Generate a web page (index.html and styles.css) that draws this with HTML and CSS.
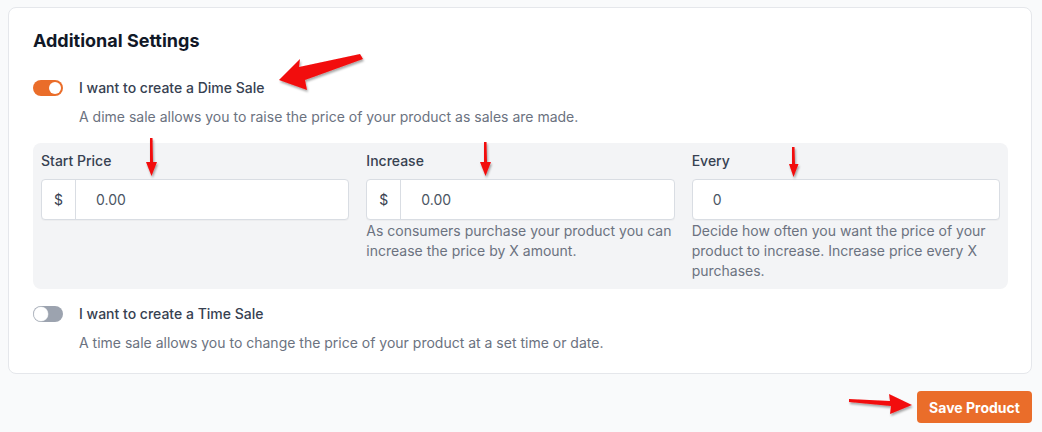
FILE: index.html
```html
<!DOCTYPE html>
<html>
<head>
<meta charset="utf-8">
<link rel="stylesheet" href="styles.css">
</head>
<body>
<div class="page">
  <section class="card">
    <h2 class="title">Additional Settings</h2>

    <div class="toggle-row">
      <span class="toggle on"><span class="knob"></span></span>
      <span class="toggle-label">I want to create a Dime Sale</span>
    </div>
    <p class="desc">A dime sale allows you to raise the price of your product as sales are made.</p>

    <div class="panel">
      <div class="field">
        <label class="field-label">Start Price</label>
        <div class="input-group">
          <span class="addon">$</span>
          <span class="input-value">0.00</span>
        </div>
      </div>
      <div class="field">
        <label class="field-label">Increase</label>
        <div class="input-group">
          <span class="addon">$</span>
          <span class="input-value">0.00</span>
        </div>
        <p class="help">As consumers purchase your product you can increase the price by X amount.</p>
      </div>
      <div class="field">
        <label class="field-label">Every</label>
        <div class="input-group">
          <span class="input-value">0</span>
        </div>
        <p class="help">Decide how often you want the price of your product to increase. Increase price every X purchases.</p>
      </div>
    </div>

    <div class="toggle-row second">
      <span class="toggle off"><span class="knob"></span></span>
      <span class="toggle-label">I want to create a Time Sale</span>
    </div>
    <p class="desc">A time sale allows you to change the price of your product at a set time or date.</p>
  </section>

  <div class="actions">
    <button class="save">Save Product</button>
  </div>
</div>

<svg class="annotations" width="1042" height="432" viewBox="0 0 1042 432">
  <defs>
    <filter id="sh" x="-20%" y="-20%" width="140%" height="140%">
      <feDropShadow dx="1" dy="2" stdDeviation="1.2" flood-color="#000" flood-opacity="0.35"/>
    </filter>
  </defs>
  <g fill="#f20c0c" filter="url(#sh)">
    <polygon points="279,80 300,59 299,67 360,54 363,59 305,80 307,90"/>
    <polygon points="150,138 152.5,138 153,162 157,162 151.5,176 146,162 150,162"/>
    <polygon points="484,142 486.5,142 487,162 491,162 485.5,176 480,162 484,162"/>
    <polygon points="792,147 794.5,147 795,164 798.5,164 793.5,177 789,164 792,164"/>
    <polygon points="849,399 890,401 889,394 912,405 890,414 891,406 849,402"/>
  </g>
</svg>
</body>
</html>
```
FILE: styles.css
```css
* { box-sizing: border-box; }

html, body {
  margin: 0;
  padding: 0;
  background: #f9fafb;
}

body {
  font-family: Inter, "Noto Sans", "Liberation Sans", sans-serif;
  color: #374151;
  width: 1042px;
  height: 432px;
  overflow: hidden;
  position: relative;
}

.page {
  padding: 7px 10px 0 8px;
}

.card {
  background: #ffffff;
  border: 1px solid #e5e7eb;
  border-radius: 8px;
  padding: 21px 23px 20px 24px;
}

.title {
  margin: 0;
  font-size: 18px;
  line-height: 24px;
  font-weight: 700;
  color: #111827;
}

.toggle-row {
  display: flex;
  align-items: center;
  gap: 16px;
  margin-top: 25px;
  height: 20px;
}

.toggle-row.second {
  margin-top: 15px;
}

.toggle {
  width: 30px;
  height: 16px;
  border-radius: 8px;
  display: flex;
  align-items: center;
  padding: 2px;
  flex: none;
}

.toggle.on {
  background: #ea6d2a;
  justify-content: flex-end;
}

.toggle.off {
  background: #9ca3af;
  justify-content: flex-start;
}

.knob {
  width: 12px;
  height: 12px;
  border-radius: 50%;
  background: #ffffff;
}

.toggle.off .knob {
  width: 14px;
  height: 14px;
  margin-left: -1px;
  box-shadow: 0 0 0 0.5px #d1d5db;
}

.toggle-label {
  font-size: 14px;
  line-height: 20px;
  font-weight: 500;
  color: #374151;
}

.desc {
  margin: 9px 0 0 46px;
  font-size: 14px;
  line-height: 20px;
  color: #6b7280;
}

.panel {
  margin-top: 16px;
  background: #f3f4f6;
  border-radius: 8px;
  padding: 8px 8px 8px 8px;
  display: grid;
  grid-template-columns: repeat(3, 1fr);
  column-gap: 17px;
}

.field-label {
  display: block;
  font-size: 14px;
  line-height: 20px;
  font-weight: 500;
  color: #374151;
}

.input-group {
  margin-top: 8px;
  height: 41px;
  background: #ffffff;
  border: 1px solid #d9dde3;
  border-radius: 4px;
  display: flex;
  align-items: center;
  box-shadow: 0 1px 1px rgba(0, 0, 0, 0.03);
}

.addon {
  width: 34px;
  height: 100%;
  border-right: 1px solid #d9dde3;
  display: flex;
  align-items: center;
  justify-content: center;
  font-size: 14px;
  color: #374151;
  flex: none;
}

.input-value {
  padding-left: 20px;
  font-size: 14px;
  color: #4b5563;
}

.help {
  margin: 1px 0 0 0;
  font-size: 14px;
  line-height: 20px;
  color: #6b7280;
}

.actions {
  display: flex;
  justify-content: flex-end;
  margin-top: 17px;
}

.save {
  height: 32px;
  padding: 0 12px;
  width: 115px;
  background: #ea6d2a;
  color: #ffffff;
  border: none;
  border-radius: 4px;
  font-family: Inter, "Noto Sans", "Liberation Sans", sans-serif;
  font-size: 14px;
  font-weight: 700;
}

.annotations {
  position: absolute;
  left: 0;
  top: 0;
  pointer-events: none;
}
```
